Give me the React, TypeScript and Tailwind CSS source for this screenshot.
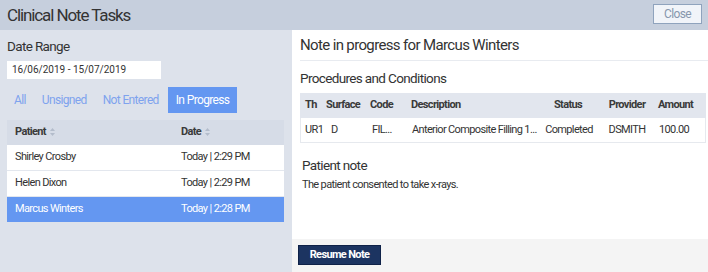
import React from 'react';

const rows = [
  { name: 'Shirley Crosby', date: 'Today | 2:29 PM', selected: false },
  { name: 'Helen Dixon', date: 'Today | 2:29 PM', selected: false },
  { name: 'Marcus Winters', date: 'Today | 2:28 PM', selected: true },
];

const tabs = ['All', 'Unsigned', 'Not Entered', 'In Progress'];

const SortIcon = () => (
  <svg width="5" height="8" viewBox="0 0 5 8" className="inline-block ml-[4px] align-[-1px]">
    <path d="M2.5 0 L5 3 H0 Z" fill="#b3bccb" />
    <path d="M2.5 8 L5 5 H0 Z" fill="#b3bccb" />
  </svg>
);

const App: React.FC = () => {
  return (
    <div
      className="w-[708px] h-[272px] flex flex-col bg-[#dde2eb] text-[#333] overflow-hidden tracking-[-0.04em]"
      style={{ fontFamily: 'Roboto, "Liberation Sans", sans-serif' }}
    >
      {/* header */}
      <div className="h-[30px] shrink-0 flex items-center justify-between bg-[#c6cfdd] pl-[7px] pr-[6px]">
        <h1 className="text-[17px] leading-none text-[#333] tracking-[-0.065em]">Clinical Note Tasks</h1>
        <button className="w-[49px] h-[20px] mb-[3px] bg-[#f1f4f9] border border-[#8fa3bd] text-[12px] text-[#8797ad]">Close</button>
      </div>

      <div className="flex flex-1">
        {/* left panel */}
        <div className="w-[292px] pl-[7px] pr-[8px]">
          <div className="mt-[8px] h-[16px] text-[13.5px] leading-[16px]">Date Range</div>
          <div className="mt-[7px] w-[154px] h-[18px] bg-white text-[10px] leading-[18px] pl-[5px] tracking-normal">16/06/2019 - 15/07/2019</div>
          <div className="mt-[8px] flex gap-[2px] text-[12px] h-[26px]">
            {tabs.map((t) => (
              <span
                key={t}
                className={`leading-[26px] ${t === 'In Progress' ? 'px-[8px] bg-[#6497f1] text-white' : 'px-[7px] text-[#7ea3ee]'}`}
              >
                {t}
              </span>
            ))}
          </div>
          <div className="mt-[7px] w-[277px]">
            <div className="h-[25px] flex items-center bg-[#d6dce7] text-[11px] font-bold text-[#3a3a3a]">
              <div className="w-[174px] pl-[8px]">Patient<SortIcon /></div>
              <div>Date<SortIcon /></div>
            </div>
            {rows.map((r) => (
              <div
                key={r.name}
                className={`flex items-center text-[11px] ${r.selected ? 'h-[25px] bg-[#6497f1] text-white' : 'h-[26px] border-b border-[#e3e7ee] bg-white text-[#333]'}`}
              >
                <div className="w-[174px] pl-[8px]">{r.name}</div>
                <div>{r.date}</div>
              </div>
            ))}
          </div>
        </div>

        {/* right panel */}
        <div className="flex-1 flex flex-col">
          <div className="flex-1 bg-white pl-[8px] pr-[2px]">
            <div className="mt-[6px] h-[18px] text-[15px] leading-[18px]">Note in progress for Marcus Winters</div>
            <div className="mt-[6px] mr-[-2px] border-b border-[#e8ebf0]" />
            <div className="mt-[9px] h-[16px] text-[13.5px] leading-[16px]">Procedures and Conditions</div>
            <div className="mt-[7px] text-[11px]">
              <div className="h-[25px] flex items-center bg-[#e2e6ee] font-bold text-[#3a3a3a]">
                <div className="w-[24px] pl-[5px]">Th</div>
                <div className="w-[44px] pl-[2px]">Surface</div>
                <div className="w-[40px] pl-[2px]">Code</div>
                <div className="w-[130px] pl-[3px]">Description</div>
                <div className="w-[60px] text-center">Status</div>
                <div className="w-[58px] text-center">Provider</div>
                <div className="flex-1 pl-[2px]">Amount</div>
              </div>
              <div className="h-[25px] flex items-center border-x border-b border-[#e6e9ee] whitespace-nowrap">
                <div className="w-[24px] pl-[4px]">UR1</div>
                <div className="w-[44px] pl-[6px]">D</div>
                <div className="w-[40px] pl-[3px]">FIL...</div>
                <div className="w-[130px] pl-[3px] overflow-hidden">Anterior Composite Filling 1...</div>
                <div className="w-[60px] text-center">Completed</div>
                <div className="w-[58px] text-center pr-[2px]">DSMITH</div>
                <div className="flex-1 pl-[2px]">100.00</div>
              </div>
            </div>
            <div className="mt-[14px] pl-[2px] h-[16px] text-[13.5px] leading-[16px]">Patient note</div>
            <div className="mt-[5px] pl-[2px] text-[11px] leading-[14px]">The patient consented to take x-rays.</div>
          </div>
          <div className="h-[33px] shrink-0 bg-[#f4f4f4] flex items-center pl-[6px] pb-[1px]">
            <button className="w-[83px] h-[20px] bg-[#1c3461] border border-[#0f2248] text-white text-[11px] font-bold">Resume Note</button>
          </div>
        </div>
      </div>
    </div>
  );
};

export default App;
